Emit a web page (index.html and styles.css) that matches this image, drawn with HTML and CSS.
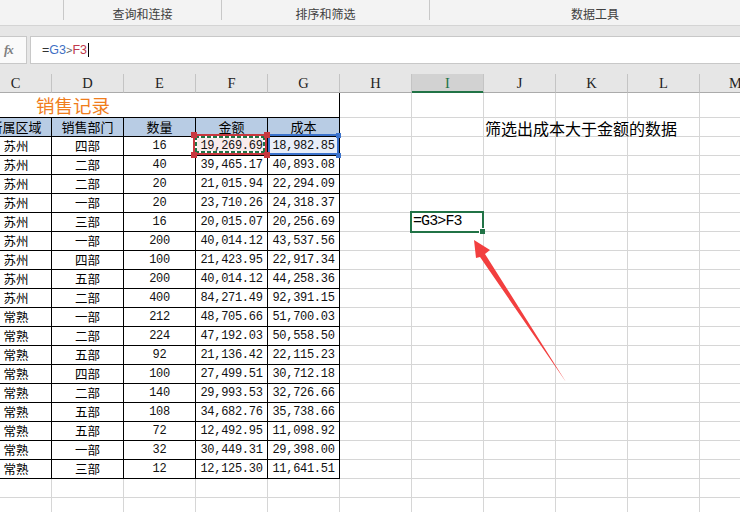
FILE: index.html
```html
<!DOCTYPE html>
<html lang="zh-CN">
<head>
<meta charset="utf-8">
<title>销售记录</title>
<link rel="stylesheet" href="styles.css">
</head>
<body>
<div class="ribbon">
  <div class="grp grp-a"></div>
  <div class="grp grp-b">查询和连接</div>
  <div class="grp grp-c">排序和筛选</div>
  <div class="grp grp-d">数据工具</div>
</div>
<div class="fbar">
  <div class="fx"><i>fx</i></div>
  <div class="finput"><span class="f-eq">=</span><span class="f-g">G3</span><span class="f-gt">&gt;</span><span class="f-f">F3</span><span class="caret"></span></div>
</div>
<div class="colhdr">
  <div class="ch">C</div><div class="ch">D</div><div class="ch">E</div><div class="ch">F</div><div class="ch">G</div><div class="ch">H</div><div class="ch sel">I</div><div class="ch">J</div><div class="ch">K</div><div class="ch">L</div><div class="ch">M</div>
</div>
<div class="sheet">
  <div class="tbl">
    <div class="title">销售记录</div>
    <div class="hd">所属区域</div><div class="hd">销售部门</div><div class="hd">数量</div><div class="hd">金额</div><div class="hd">成本</div>
    <div class="c">苏州</div><div>四部</div><div class="n">16</div><div class="n src"><i class="ants"></i>19,269.69</div><div class="n ref">18,982.85</div>
    <div class="c">苏州</div><div>二部</div><div class="n">40</div><div class="n">39,465.17</div><div class="n">40,893.08</div>
    <div class="c">苏州</div><div>二部</div><div class="n">20</div><div class="n">21,015.94</div><div class="n">22,294.09</div>
    <div class="c">苏州</div><div>一部</div><div class="n">20</div><div class="n">23,710.26</div><div class="n">24,318.37</div>
    <div class="c">苏州</div><div>三部</div><div class="n">16</div><div class="n">20,015.07</div><div class="n">20,256.69</div>
    <div class="c">苏州</div><div>一部</div><div class="n">200</div><div class="n">40,014.12</div><div class="n">43,537.56</div>
    <div class="c">苏州</div><div>四部</div><div class="n">100</div><div class="n">21,423.95</div><div class="n">22,917.34</div>
    <div class="c">苏州</div><div>五部</div><div class="n">200</div><div class="n">40,014.12</div><div class="n">44,258.36</div>
    <div class="c">苏州</div><div>二部</div><div class="n">400</div><div class="n">84,271.49</div><div class="n">92,391.15</div>
    <div class="c">常熟</div><div>一部</div><div class="n">212</div><div class="n">48,705.66</div><div class="n">51,700.03</div>
    <div class="c">常熟</div><div>二部</div><div class="n">224</div><div class="n">47,192.03</div><div class="n">50,558.50</div>
    <div class="c">常熟</div><div>五部</div><div class="n">92</div><div class="n">21,136.42</div><div class="n">22,115.23</div>
    <div class="c">常熟</div><div>四部</div><div class="n">100</div><div class="n">27,499.51</div><div class="n">30,712.18</div>
    <div class="c">常熟</div><div>二部</div><div class="n">140</div><div class="n">29,993.53</div><div class="n">32,726.66</div>
    <div class="c">常熟</div><div>五部</div><div class="n">108</div><div class="n">34,682.76</div><div class="n">35,738.66</div>
    <div class="c">常熟</div><div>五部</div><div class="n">72</div><div class="n">12,492.95</div><div class="n">11,098.92</div>
    <div class="c">常熟</div><div>一部</div><div class="n">32</div><div class="n">30,449.31</div><div class="n">29,398.00</div>
    <div class="c">常熟</div><div>三部</div><div class="n">12</div><div class="n">12,125.30</div><div class="n">11,641.51</div>
  </div>
  <div class="note">筛选出成本大于金额的数据</div>
  <div class="act">=G3&gt;F3</div>
</div>
<svg class="arrow" width="740" height="512" viewBox="0 0 740 512">
  <polygon points="474,240 490,250 485,254 566,382 480,257 476,258" fill="#f23f3f"/>
</svg>
</body>
</html>
```
FILE: styles.css
```css
body {
  margin: 0;
  width: 740px;
  height: 512px;
  overflow: hidden;
  position: relative;
  background: #fff;
  font-family: "Noto Sans CJK SC", sans-serif;
  color: #000;
}

/* ribbon */
.ribbon {
  display: flex;
  height: 25px;
  background: #f3f3f3;
  border-bottom: 1px solid #d4d4d4;
}
.grp {
  flex: none;
  box-sizing: border-box;
  height: 20px;
  padding-top: 6px;
  border-right: 1px solid #c8c8c8;
  text-align: center;
  font-size: 12px;
  line-height: 16px;
  color: #404040;
  white-space: nowrap;
}
.grp-a { width: 64px; }
.grp-b { width: 158px; }
.grp-c { width: 208px; }
.grp-d { width: 330px; border-right: none; }

/* formula bar */
.fbar {
  display: flex;
  gap: 3px;
  padding: 10px 0;
  background: #e6e6e6;
}
.fx {
  flex: none;
  box-sizing: border-box;
  width: 28px;
  height: 28px;
  margin-left: -1px;
  padding-left: 4px;
  border: 1px solid #c8c8c8;
  background: #fafafa;
  display: flex;
  align-items: center;
}
.fx i {
  font-family: "Liberation Serif", serif;
  font-size: 13px;
  font-weight: bold;
  color: #808080;
  letter-spacing: -1px;
}
.finput {
  flex: 1;
  box-sizing: border-box;
  height: 28px;
  margin-right: -2px;
  padding-left: 11px;
  border: 1px solid #c8c8c8;
  background: #fff;
  display: flex;
  align-items: center;
  font-family: "Liberation Sans", sans-serif;
  font-size: 12.5px;
}
.f-eq { color: #333; }
.f-g { color: #3f6fc4; }
.f-gt { color: #666; font-size: 11px; }
.f-f { color: #c0394b; }
.caret {
  width: 1px;
  height: 14px;
  margin-left: 1px;
  background: #000;
}

/* column headers */
.colhdr {
  display: flex;
  height: 19px;
  margin-left: -20px;
  background: #e6e6e6;
}
.ch {
  flex: none;
  box-sizing: border-box;
  width: 72px;
  height: 19px;
  border-right: 1px solid #c4c4c4;
  border-bottom: 1px solid #ababab;
  text-align: center;
  font-family: "Liberation Serif", serif;
  font-size: 14.5px;
  line-height: 18px;
  color: #222;
}
.ch.sel {
  background: #d2d2d2;
  color: #217346;
  border-bottom-color: #217346;
  box-shadow: inset 0 -1px #217346;
}

/* sheet */
.sheet {
  display: grid;
  grid-template-columns: repeat(11, 72px);
  grid-template-rows: 25px repeat(21, 19px);
  margin-left: -20px;
  background:
    repeating-linear-gradient(to right, transparent 0 71px, #d6d6d6 71px 72px),
    linear-gradient(#fff, #fff) 0 0 / 100% 24px no-repeat,
    repeating-linear-gradient(to bottom, transparent 0 18px, #d6d6d6 18px 19px) 0 6px,
    #fff;
}

.tbl {
  grid-column: 1 / span 5;
  grid-row: 1 / span 20;
  display: grid;
  grid-template-columns: repeat(5, 72px);
  grid-template-rows: 25px repeat(19, 19px);
  background: #fff;
}
.tbl > div {
  box-sizing: border-box;
  border-right: 1px solid #000;
  border-bottom: 1px solid #000;
  display: flex;
  align-items: center;
  justify-content: center;
  font-size: 12.5px;
  line-height: 18px;
  white-space: nowrap;
  color: #000;
}
.tbl > .c { color: #000; padding-left: 1px; }
.tbl > .title {
  grid-column: 1 / span 5;
  justify-content: flex-start;
  padding-left: 56px;
  font-size: 18.5px;
  line-height: 24px;
  color: #f07d1c;
}
.tbl > .hd { background: #b8cce4; font-size: 13px; }
.tbl > .n {
  font-family: "Liberation Mono", monospace;
  font-size: 12px;
  letter-spacing: -0.3px;
  color: #111;
}

/* copy-source cell F3 */
.tbl > .src {
  position: relative;
  background: #f9ebeb;
}
.src::before {
  content: "";
  position: absolute;
  left: -3px;
  top: -3px;
  right: 0;
  bottom: 0;
  border: 2px solid #c8383f;
  z-index: 2;
}
.src::after {
  content: "";
  position: absolute;
  left: -5px;
  top: -5px;
  width: 6px;
  height: 6px;
  background: #c8383f;
  box-shadow: 73px 0 #c8383f, 0 20px #c8383f, 73px 20px #c8383f;
  z-index: 3;
}
.ants {
  position: absolute;
  left: -1px;
  top: -1px;
  right: 2px;
  bottom: 2px;
  z-index: 2;
  background:
    repeating-linear-gradient(90deg, #217346 0 4px, #fff 4px 6px) 0 0 / 100% 2px no-repeat,
    repeating-linear-gradient(90deg, #217346 0 4px, #fff 4px 6px) 0 100% / 100% 2px no-repeat,
    repeating-linear-gradient(180deg, #217346 0 4px, #fff 4px 6px) 0 0 / 2px 100% no-repeat,
    repeating-linear-gradient(180deg, #217346 0 4px, #fff 4px 6px) 100% 0 / 2px 100% no-repeat;
}

/* referenced cell G3 */
.tbl > .ref {
  position: relative;
  background: #e8eef9;
}
.ref::before {
  content: "";
  position: absolute;
  left: 0;
  top: -3px;
  right: 0;
  bottom: 0;
  border: 2px solid #3b72cc;
  z-index: 1;
}
.ref::after {
  content: "";
  position: absolute;
  right: -2px;
  top: -4px;
  width: 5px;
  height: 5px;
  background: #3b72cc;
  box-shadow: 0 20px #3b72cc;
  z-index: 1;
}

/* note and active cell */
.note {
  grid-column: 8 / span 4;
  grid-row: 2;
  align-self: center;
  padding-left: 1px;
  font-size: 16px;
  line-height: 18px;
  white-space: nowrap;
}
.act {
  grid-column: 7;
  grid-row: 7;
  position: relative;
  padding-left: 1px;
  font-family: "Liberation Mono", monospace;
  font-size: 15px;
  letter-spacing: -0.9px;
  line-height: 18px;
  white-space: nowrap;
}
.act::before {
  content: "";
  position: absolute;
  left: -2px;
  top: -2px;
  right: 0;
  bottom: -1px;
  border: 2px solid #217346;
}
.act::after {
  content: "";
  position: absolute;
  right: -1px;
  bottom: -2px;
  width: 5px;
  height: 5px;
  background: #217346;
  border-left: 1px solid #fff;
  border-top: 1px solid #fff;
}

.arrow {
  position: absolute;
  left: 0;
  top: 0;
  pointer-events: none;
}
```
